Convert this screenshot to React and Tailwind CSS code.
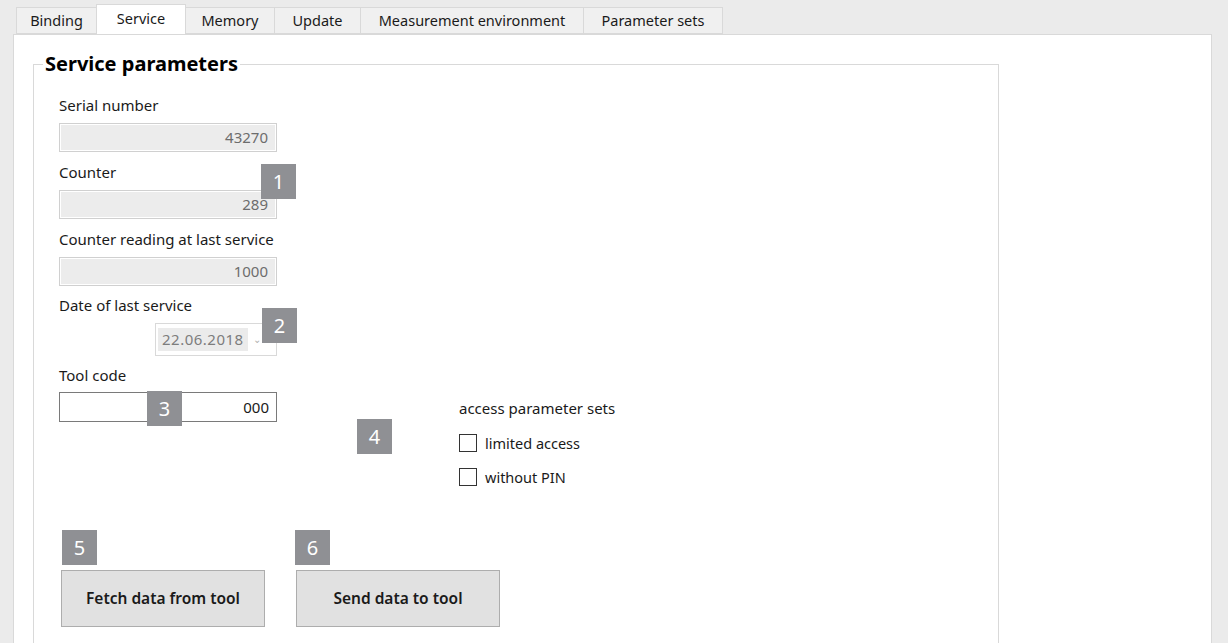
import React from "react";

const font = { fontFamily: '"Noto Sans", "Open Sans", "Liberation Sans", sans-serif' };

function Tab({ label, w, active }) {
  if (active) {
    return (
      <div
        className={`relative z-10 -mt-[3px] -mb-[1px] flex h-[30px] items-center justify-center border border-b-0 border-[#d9d9d9] bg-white text-[14.5px] text-[#1a1a1a] ${w}`}
      >
        <span className="-mt-[2px]">{label}</span>
      </div>
    );
  }
  return (
    <div
      className={`-ml-[1px] flex h-[27px] items-center justify-center border border-[#d9d9d9] bg-[#f0f0f0] text-[14.5px] text-[#1a1a1a] first:ml-0 ${w}`}
    >
      {label}
    </div>
  );
}

function Badge({ n, className }) {
  return (
    <div
      className={`absolute flex h-[35px] w-[35px] items-center justify-center bg-[#8f9094] text-[20px] leading-none text-white ${className}`}
    >
      {n}
    </div>
  );
}

function ReadOnlyField({ value }) {
  return (
    <div className="flex h-[29px] w-[218px] items-center justify-end border border-[#d0d0d0] bg-[#ececec] pr-[8px] text-[15px] text-[#6d6d6d] shadow-[inset_0_0_0_1px_#ffffff]">
      {value}
    </div>
  );
}

function Label({ children, className = "" }) {
  return <div className={`h-[20px] text-[15px] leading-[20px] text-[#1a1a1a] ${className}`}>{children}</div>;
}

function Check({ label, className = "" }) {
  return (
    <div className={`flex items-center ${className}`}>
      <div className="h-[18px] w-[18px] border border-[#333333] bg-white" />
      <span className="ml-[8px] text-[14.5px] leading-[18px] text-[#1a1a1a]">{label}</span>
    </div>
  );
}

export default function App() {
  return (
    <div className="flex h-[643px] w-[1228px] flex-col overflow-hidden bg-[#ebebeb]" style={font}>
      <div className="flex items-start pl-[16px] pt-[7px]">
        <Tab label="Binding" w="w-[81px]" />
        <Tab label="Service" w="w-[90px] -ml-[1px]" active />
        <Tab label="Memory" w="w-[90px]" />
        <Tab label="Update" w="w-[87px]" />
        <Tab label="Measurement environment" w="w-[224px]" />
        <Tab label="Parameter sets" w="w-[140px]" />
      </div>

      <div className="ml-[13px] w-[1199px] flex-1 border border-[#d9d9d9] bg-white pl-[19px] pt-[17px]">
        <fieldset className="h-[620px] w-[966px] border border-[#d9d9d9]">
          <legend className="ml-[9px] px-[2px] text-[20px] font-bold leading-[24px] text-[#000000]">
            Service parameters
          </legend>

          <div className="relative ml-[25px] pt-[19px]">
            <Label>Serial number</Label>
            <div className="mt-[8px]">
              <ReadOnlyField value="43270" />
            </div>

            <Label className="mt-[10px]">Counter</Label>
            <div className="mt-[8px]">
              <ReadOnlyField value="289" />
            </div>

            <Label className="mt-[10px]">Counter reading at last service</Label>
            <div className="mt-[8px]">
              <ReadOnlyField value="1000" />
            </div>

            <Label className="mt-[9px]">Date of last service</Label>
            <div className="mt-[8px] ml-[96px] flex h-[33px] w-[122px] items-center border border-[#d9d9d9] bg-white pl-[2px]">
              <div className="flex h-[23px] items-center bg-[#ebebeb] px-[4px] text-[15px] tracking-[0.5px] text-[#7d7d7d]">
                22.06.2018
              </div>
              <span className="ml-[5px] text-[10px] text-[#b0b0b0]">⌄</span>
            </div>

            <div className="mt-[9px] flex items-start">
              <div className="w-[218px]">
                <Label>Tool code</Label>
                <div className="mt-[7px] flex h-[30px] w-[218px] items-center justify-end border border-[#7a7a7a] bg-white pr-[7px] text-[15px] text-[#1a1a1a]">
                  000
                </div>
              </div>
              <div className="ml-[182px] mt-[33px]">
                <Label>access parameter sets</Label>
                <Check label="limited access" className="mt-[16px]" />
                <Check label="without PIN" className="mt-[16px]" />
              </div>
            </div>

            <div className="ml-[2px] mt-[84px] flex gap-[31px]">
              <button className="h-[57px] w-[204px] border border-[#adadad] bg-[#e1e1e1] text-[15.5px] font-semibold text-[#1a1a1a]">
                Fetch data from tool
              </button>
              <button className="h-[57px] w-[204px] border border-[#adadad] bg-[#e1e1e1] text-[15.5px] font-semibold text-[#1a1a1a]">
                Send data to tool
              </button>
            </div>

            <Badge n="1" className="left-[202px] top-[88px]" />
            <Badge n="2" className="left-[203px] top-[232px]" />
            <Badge n="3" className="left-[88px] top-[315px]" />
            <Badge n="4" className="left-[298px] top-[343px]" />
            <Badge n="5" className="left-[3px] top-[454px]" />
            <Badge n="6" className="left-[236px] top-[454px]" />
          </div>
        </fieldset>
      </div>
    </div>
  );
}
